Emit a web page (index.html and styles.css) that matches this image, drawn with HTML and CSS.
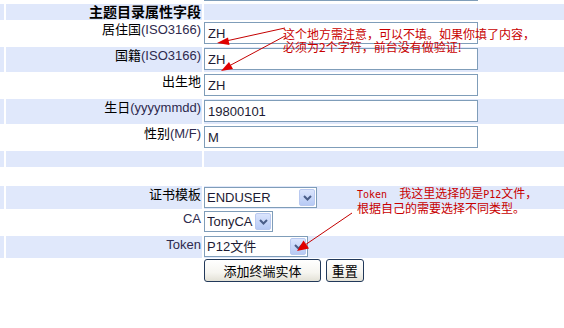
FILE: index.html
```html
<!DOCTYPE html>
<html lang="zh-CN">
<head>
    <meta charset="UTF-8">
    <meta name="viewport" content="width=device-width, initial-scale=1.0">
    <title>添加终端实体</title>
    <link rel="stylesheet" href="styles.css">
</head>
<body>
    <div class="page">
        <form class="form">
            <div class="row field">
                <div class="edge"></div>
                <div class="label"></div>
                <div class="value"><input class="text" type="text"></div>
            </div>
            <div class="row alt head">
                <div class="edge"></div>
                <div class="label"><b>主题目录属性字段</b></div>
                <div class="value"></div>
            </div>
            <div class="row field">
                <div class="edge"></div>
                <div class="label">居住国<span class="en">(ISO3166)</span></div>
                <div class="value"><input class="text" type="text" value="ZH"></div>
            </div>
            <div class="row alt field">
                <div class="edge"></div>
                <div class="label">国籍<span class="en">(ISO3166)</span></div>
                <div class="value"><input class="text" type="text" value="ZH"></div>
            </div>
            <div class="row field">
                <div class="edge"></div>
                <div class="label">出生地</div>
                <div class="value"><input class="text" type="text" value="ZH"></div>
            </div>
            <div class="row alt field">
                <div class="edge"></div>
                <div class="label">生日<span class="en">(yyyymmdd)</span></div>
                <div class="value"><input class="text" type="text" value="19800101"></div>
            </div>
            <div class="row field">
                <div class="edge"></div>
                <div class="label">性别<span class="en">(M/F)</span></div>
                <div class="value"><input class="text" type="text" value="M"></div>
            </div>
            <div class="row alt blank">
                <div class="edge"></div>
                <div class="label"></div>
                <div class="value"></div>
            </div>
            <div class="row blank tall">
                <div class="edge"></div>
                <div class="label"></div>
                <div class="value"></div>
            </div>
            <div class="row alt choice">
                <div class="edge"></div>
                <div class="label">证书模板</div>
                <div class="value">
                    <span class="select w-template">
                        <select><option>ENDUSER</option></select>
                        <span class="drop"><svg width="9" height="6" viewBox="0 0 9 6"><polyline points="1,1 4.5,4.5 8,1" fill="none" stroke="#4a5e88" stroke-width="2"/></svg></span>
                    </span>
                </div>
            </div>
            <div class="row choice ca">
                <div class="edge"></div>
                <div class="label"><span class="en">CA</span></div>
                <div class="value">
                    <span class="select w-ca">
                        <select><option>TonyCA</option></select>
                        <span class="drop"><svg width="9" height="6" viewBox="0 0 9 6"><polyline points="1,1 4.5,4.5 8,1" fill="none" stroke="#4a5e88" stroke-width="2"/></svg></span>
                    </span>
                </div>
            </div>
            <div class="row alt choice token">
                <div class="edge"></div>
                <div class="label"><span class="en">Token</span></div>
                <div class="value">
                    <span class="select w-token">
                        <select><option>P12文件</option></select>
                        <span class="drop"><svg width="9" height="6" viewBox="0 0 9 6"><polyline points="1,1 4.5,4.5 8,1" fill="none" stroke="#4a5e88" stroke-width="2"/></svg></span>
                    </span>
                </div>
            </div>
            <div class="row actions">
                <div class="edge"></div>
                <div class="label"></div>
                <div class="value">
                    <button class="btn wide" type="button">添加终端实体</button>
                    <button class="btn" type="reset">重置</button>
                </div>
            </div>
        </form>

        <!-- 红色批注 -->
        <div class="note note-top">这个地方需注意，可以不填。如果你填了内容，<br>必须为2个字符，前台没有做验证!</div>
        <div class="note note-token"><span class="mono">Token&nbsp;&nbsp;</span>我这里选择的是<span class="mono">P12</span>文件，<br>根据自己的需要选择不同类型。</div>

        <svg class="arrows" width="564" height="328" viewBox="0 0 564 328">
            <g stroke="#c40000" stroke-width="1" fill="none">
                <line x1="285" y1="28" x2="226" y2="41"/>
                <line x1="285" y1="36" x2="229" y2="66"/>
                <line x1="352" y1="213" x2="305" y2="245"/>
            </g>
            <g fill="#e00000">
                <polygon points="217,43 228,37.5 229.5,45"/>
                <polygon points="221,71 229,62 233,69"/>
                <polygon points="297,251 303.5,240.5 309,248.5"/>
            </g>
        </svg>
    </div>
</body>
</html>
```

FILE: styles.css
```css
body {
    margin: 0;
    background: #ffffff;
    font-family: "Liberation Sans", "Noto Sans CJK SC", sans-serif;
    font-size: 13px;
    color: #000000;
}

.page {
    position: relative;
    width: 564px;
    height: 328px;
    overflow: hidden;
}

.form {
    display: flex;
    flex-direction: column;
    gap: 1px;
    margin: -22px 0 0 0; /* la pagina esta desplazada, solo se ve el borde del campo anterior */
}

.row {
    display: grid;
    grid-template-columns: 4px 196px 1fr;
    column-gap: 2px;
}

.row.alt > div {
    background-color: #e0e8fb;
}

.label {
    text-align: right;
    line-height: 16px;
    padding: 1px 1px 0 0;
    white-space: nowrap;
}

.en {
    color: #2e2a4e;
}

.head {
    height: 16px;
}

.head .label {
    padding-top: 0;
    font-size: 14px;
}

.field {
    height: 25px;
}

.field .value {
    padding-top: 1px;
}

.blank {
    height: 16px;
}

.blank.tall {
    height: 17px;
}

.choice {
    height: 23px;
}

.choice .value {
    padding-top: 1px;
}

.choice .label {
    padding-top: 1px;
}

.ca {
    height: 25px;
}

.token {
    height: 22px;
}

.token .value {
    padding-top: 0;
}

.text {
    box-sizing: border-box;
    width: 274px;
    height: 22px;
    margin: 0;
    border: 1px solid #7f9db9;
    padding: 0 3px;
    font-family: "Liberation Sans", sans-serif;
    font-size: 13px;
    color: #1c1a33;
    background: #ffffff;
}

.select {
    box-sizing: border-box;
    display: inline-flex;
    align-items: center;
    height: 21px;
    border: 1px solid #7f9db9;
    background: #ffffff;
    vertical-align: top;
}

.w-template { width: 113px; }
.w-ca { width: 69px; }
.w-token { width: 104px; }

.select select {
    appearance: none;
    -webkit-appearance: none;
    flex: 1;
    min-width: 0;
    height: 100%;
    border: none;
    outline: none;
    background: transparent;
    padding: 0 0 0 2px;
    margin: 0;
    font-family: "Liberation Sans", "Noto Sans CJK SC", sans-serif;
    font-size: 13px;
    color: #1c1a33;
}

.drop {
    box-sizing: border-box;
    display: flex;
    align-items: center;
    justify-content: center;
    width: 16px;
    height: 17px;
    margin-right: 1px;
    border: 1px solid #b9c9f0;
    border-radius: 2px;
    background: linear-gradient(180deg, #dbe5fd, #b7caf5);
}

.actions .value {
    padding-top: 0;
}

.btn {
    box-sizing: border-box;
    height: 23px;
    margin: 0 1px 0 0;
    padding: 0 5px;
    border: 1px solid #22395a;
    border-radius: 3px;
    background: linear-gradient(180deg, #ffffff 0%, #f6f5f0 60%, #e3e1d6 100%);
    font-family: "Noto Sans CJK SC", sans-serif;
    font-size: 13px;
    line-height: 19px;
    color: #000000;
    vertical-align: top;
}

.btn.wide {
    width: 117px;
}

.note {
    position: absolute;
    color: #c80000;
    font-family: "Noto Sans CJK SC", sans-serif;
    font-size: 12px;
    line-height: 13px;
    white-space: nowrap;
}

.note-top {
    left: 283px;
    top: 27px;
}

.note-token {
    left: 357px;
    top: 186px;
}

.mono {
    font-family: "DejaVu Sans Mono", monospace;
    font-size: 10px;
}

.arrows {
    position: absolute;
    left: 0;
    top: 0;
    pointer-events: none;
}
```
